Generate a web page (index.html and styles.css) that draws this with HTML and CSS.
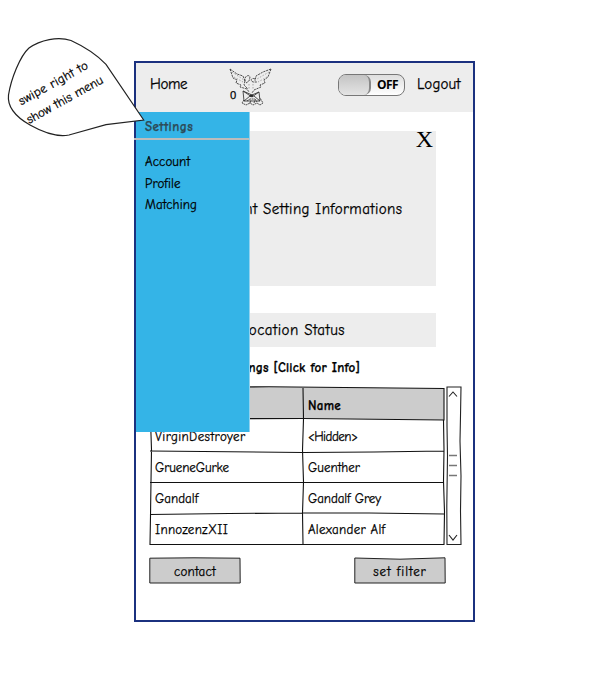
FILE: index.html
```html
<!DOCTYPE html>
<html lang="en">
<head>
<meta charset="utf-8">
<title>Settings menu</title>
<link rel="stylesheet" href="styles.css">
</head>
<body>
<main class="screen">
  <header class="topbar">
    <span class="home">Home</span>
    <span class="mail"><span class="count">0</span>
      <svg class="owl" width="44" height="40" viewBox="0 0 44 40" fill="none" stroke="#333" stroke-width=".85">
        <path stroke-dasharray="2.2 .8" d="M1 2 4 11 8 13 7 16 12 18 11 20 18 22 20 25M1 2 8 7 14 9 16 14M42 2 39 10 35 13 36 16 31 18 32 20 25 23 23 26M42 2 34 5 27 9 26 14M16 14 15 18 19 22M16 14C15 9 20 7 21 10L20 14 17 16M26 12C22 10 21 14 24 15L28 15"/>
        <path stroke="#999" stroke-dasharray="1.5 1.5" d="M3 5 15 13M5 10 14 15M40 5 28 12M38 10 29 15M20 17V22M24 17V22"/>
        <path d="M14 24 15 34H31L30 25 23 28ZM14 24 23 30 30 25M15 34 21 29M31 34 25 29"/>
        <path stroke-dasharray="2 .6" d="M15 33 13 36 17 38 21 36 24 38 28 36 31 38 34 36 31 31M18 34 21 32 26 32 28 35M21 36 22 33M25 36 26 33"/>
        <path d="M21 28h3v1.500h-3z" fill="#222"/>
      </svg>
    </span>
    <span class="switch"><span class="knob"></span><span class="state">OFF</span></span>
    <span class="logout">Logout</span>
  </header>
  <div class="content">
    <section class="info"><span class="close">X</span><span class="info-text">Account Setting Informations</span></section>
    <section class="location">Location Status</section>
    <h2 class="title">Matchings [Click for Info]</h2>
    <div class="list">
      <div class="grid">
        <svg class="lines" width="297" height="160" viewBox="0 0 297 160" fill="none" stroke="#111" stroke-width="1.1">
          <path fill="#ccc" d="M2 1.5 120 .8 295 2.5V34L154 32.5 1 33Z"/>
          <path d="M2 1 1.5 33 2.5 64 2 95 1.5 130 1 158.500H295L295.500 126 294.500 95 295 64 294.500 34M154 2 154.500 33 153.500 64 154.500 96 153.500 127 154 158M1 65 154 66.500 225 66 295 65M1 96.500H295M1 128.500 80 127.500 154 127 220 127 295 128"/>
        </svg>
        <div class="row head"><span>Nickname</span><span>Name</span></div>
        <div class="row"><span class="wide">VirginDestroyer</span><span class="tight">&lt;Hidden&gt;</span></div>
        <div class="row"><span class="short">GrueneGurke</span><span>Guenther</span></div>
        <div class="row"><span>Gandalf</span><span class="short">Gandalf Grey</span></div>
        <div class="row"><span class="mid">InnozenzXII</span><span class="mid">Alexander Alf</span></div>
      </div>
      <svg class="scroll" width="16" height="160" viewBox="0 0 16 160" fill="none" stroke="#222" stroke-width="1.100">
        <path d="M1 1H15L14.500 30 14 55 15 90 14.500 125 15 158.500H1L.8 120 1.500 70 1 40Z"/>
        <path d="M3 10.500 7 6 11 10.500M3 149 7 154 11 149"/>
        <path stroke="#777" stroke-width="1.700" d="M3 69.500H11M3 79.500H11M3 89.500H11"/>
      </svg>
    </div>
    <div class="actions">
      <button class="btn"><svg class="edge" viewBox="0 0 92 27"><path d="M.8 1.200 45 .8 91 1.200 91.200 26H.8Z"/></svg><span>contact</span></button>
      <button class="btn filter"><svg class="edge" viewBox="0 0 92 27"><path d="M.8 1 46 2.200 91 .8 91.200 26H.8Z"/></svg><span>set filter</span></button>
    </div>
  </div>
  <nav class="menu">
    <div class="menu-title">Settings</div>
    <span class="item">Account</span>
    <span class="item">Profile</span>
    <span class="item">Matching</span>
  </nav>
</main>
<aside class="callout">
  <svg width="140" height="108" viewBox="0 0 140 108"><path d="M136.700 90 99 34.300C90 25 76 16 64 10.500 51 6 33 10 22 18 13 26 4 49 1.500 65 0 78 9 87 23 95 39 104 52 107 62 105L99 94.700Z" fill="#fff" stroke="#222" stroke-width="1.200"/></svg>
  <p class="hint"><span class="first">swipe right to</span><br>show this menu</p>
</aside>
</body>
</html>
```
FILE: styles.css
```css
body {
  position: relative;
  display: flow-root;
  margin: 0;
  background: #fff;
  color: #000;
  font-family: "Comic Neue", Lato, sans-serif;
  font-size: 13px;
  -webkit-text-stroke: .25px currentColor;
}
.screen {
  box-sizing: border-box;
  position: relative;
  display: flow-root;
  width: 341px;
  height: 561px;
  margin: 61px 0 0 134px;
  border: 2px solid #1b317f;
}
.topbar {
  display: flex;
  align-items: center;
  height: 49px;
  padding: 0 12px 0 14px;
  background: #ededed;
  font-size: 15px;
}
.home { width: 78px; margin-top: -7px; letter-spacing: -.4px; }
.mail { position: relative; width: 110px; height: 44px; }
.owl { position: absolute; left: 1px; top: 1px; }
.count { position: absolute; left: 2px; top: 21px; font: 11px "Open Sans", sans-serif; }
.switch {
  box-sizing: border-box;
  display: flex;
  align-items: center;
  width: 67px;
  height: 22px;
  margin-top: -5px;
  border: 1.5px solid #777;
  border-radius: 8px;
  background: linear-gradient(#dedede, #fff);
}
.knob {
  box-sizing: border-box;
  width: 32px;
  height: 20px;
  border-right: 2px solid #888;
  border-radius: 7px;
  background: linear-gradient(#c4c4c4, #e4e4e4);
}
.state { margin-left: 6px; font: 700 12px/18px "Open Sans", sans-serif; letter-spacing: -.6px; -webkit-text-stroke: 0; }
.logout { margin: -7px 0 0 12px; letter-spacing: .1px; }
.content { padding: 19px 11px 0 14px; }
.info {
  position: relative;
  display: flex;
  align-items: center;
  justify-content: center;
  width: 286px;
  height: 155px;
  background: #ededed;
  font-size: 15px;
}
.info-text { position: relative; left: 10px; letter-spacing: .4px; }
.close { position: absolute; right: 3px; top: -5px; font: 24px "Liberation Serif", serif; -webkit-text-stroke: 0; }
.location {
  width: 286px;
  height: 34px;
  margin-top: 27px;
  background: #ededed;
  font-size: 15px;
  line-height: 34px;
  text-align: center;
  letter-spacing: .45px;
}
.title { width: 210px; margin: 13px 0 10px; font-size: 13px; line-height: 16px; text-align: right; letter-spacing: .2px; white-space: nowrap; }
.list { display: flex; }
.grid { position: relative; flex: none; width: 297px; height: 160px; margin-left: -1px; }
.lines { position: absolute; left: 0; top: 0; }
.scroll { flex: none; }
.row { position: relative; top: 1px; display: grid; grid-template-columns: 153px 1fr; height: 31px; padding-left: 6px; line-height: 31px; }
.head { box-sizing: border-box; height: 34px; padding-top: 1px; line-height: 36px; font-weight: 700; letter-spacing: .3px; }
.wide { letter-spacing: .4px; }
.mid { letter-spacing: .3px; }
.short { letter-spacing: -.1px; }
.tight { letter-spacing: -.5px; }
.actions { display: flex; justify-content: space-between; width: 297px; margin: 10px 0 0 -1px; }
.btn { position: relative; top: 1px; width: 92px; height: 27px; padding: 0; border: 0; background: none; color: #000; font: inherit; letter-spacing: .25px; }
.btn span { position: relative; top: 1px; }
.filter { letter-spacing: .9px; }
.edge { position: absolute; inset: 0; fill: #ccc; stroke: #222; }
.menu {
  position: absolute;
  left: 0;
  top: 49px;
  width: 113px;
  height: 320px;
  border-right: 1px solid #91d2ef;
  background: #34b4e7;
}
.menu-title {
  height: 26px;
  margin: 0 0 11px -2px;
  padding-left: 11px;
  border-bottom: 2px solid #bcbcbc;
  color: #2d4b57;
  font-size: 13px;
  font-weight: 700;
  line-height: 30px;
  letter-spacing: .4px;
}
.item { display: block; padding-left: 9px; line-height: 21.7px; letter-spacing: .1px; }
.callout { position: absolute; left: 7px; top: 30px; width: 140px; height: 108px; }
.callout svg { position: absolute; top: 0; left: 0; overflow: visible; }
.hint {
  position: absolute;
  left: 10px;
  top: 41px;
  margin: 0;
  line-height: 20px;
  text-align: center;
  white-space: nowrap;
  transform: rotate(-29deg);
}
.first { position: relative; left: -2px; letter-spacing: .25px; }
```
